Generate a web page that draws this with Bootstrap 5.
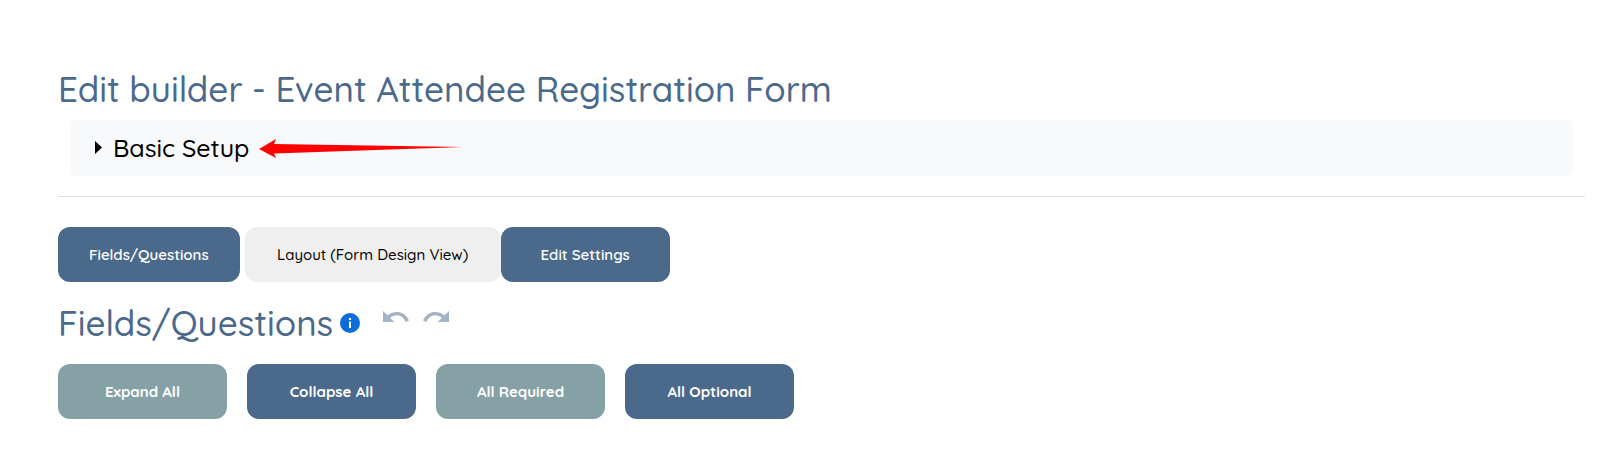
<!DOCTYPE html>
<html lang="en">
<head>
<meta charset="utf-8">
<meta name="viewport" content="width=device-width, initial-scale=1">
<title>Edit builder</title>
<link href="https://cdn.jsdelivr.net/npm/bootstrap@5.3.0/dist/css/bootstrap.min.css" rel="stylesheet">
<style>
  body { font-family: Quicksand, Lato, "Liberation Sans", sans-serif; color: #000; background: #fff; }
  .builder { padding: 68px 26px 32px 58px; }
  .builder-title { font-size: 35px; line-height: 42px; font-weight: 500; color: #4b698b; }
  .setup-panel { background: #f8f9fb; margin: 10px 12px 20px 13px; border-radius: 5px; }
  .setup-panel summary { height: 56px; padding-left: 24px; font-size: 25px; line-height: 32px; font-weight: 500; list-style: none; }
  .setup-panel summary::-webkit-details-marker { display: none; }
  .setup-marker { margin-bottom: 2px; }
  .setup-label { margin: 0 10px 0 11px; }
  .divider { border-top: 1px solid #dfe1e3; opacity: 1; }
  .tabs-row { padding-top: 30px; margin-bottom: 20px; }
  .tabs-row .btn:first-child { margin-right: 5px; }
  .bulk-row { gap: 20px; }
  .btn-builder { height: 55px; min-width: 169px; padding: 0 31px; border: 0; border-radius: 12px; font-size: 15px; line-height: 20px; font-weight: 600; color: #fff; background: #4b698b; }
  .btn-builder:hover { color: #fff; background: #3f5a79; }
  .bulk-row .btn-builder { font-weight: 700; }
  .btn-sage, .btn-sage:hover { background: #86a1a6; }
  .btn-plain, .btn-plain:hover { min-width: 256px; background: #efefef; color: #000; font-weight: 500; }
  .icon-button { line-height: 0; }
  .info-button { margin-left: 7px; }
  .history-buttons { gap: 14px; margin-left: 23px; }
</style>
</head>
<body>
<main class="builder">
  <h1 class="builder-title mb-0">Edit builder - Event Attendee Registration Form</h1>
  <details class="setup-panel">
    <summary class="d-flex align-items-center">
      <svg class="setup-marker" width="7" height="13" viewBox="0 0 7 13" aria-hidden="true"><path d="M0 0L7 6.5L0 13Z"/></svg>
      <span class="setup-label">Basic Setup</span>
      <svg width="204" height="20" viewBox="0 0 204 20" aria-hidden="true"><path d="M0 11L17 1L15 6L204 9L15 15.500L17 20Z" fill="#f00"/></svg>
    </summary>
  </details>
  <hr class="divider m-0">
  <div class="d-flex flex-wrap tabs-row">
    <button type="button" class="btn btn-builder">Fields/Questions</button>
    <button type="button" class="btn btn-builder btn-plain">Layout (Form Design View)</button>
    <button type="button" class="btn btn-builder">Edit Settings</button>
  </div>
  <div class="d-flex align-items-center mb-3 pb-1">
    <h2 class="builder-title mb-0">Fields/Questions</h2>
    <button type="button" class="btn p-0 border-0 icon-button info-button" aria-label="Information">
      <svg width="20" height="20" viewBox="0 0 20 20"><circle cx="10" cy="10" r="10" fill="#0b6cda"/><path d="M9 5h2v2H9zM9 8.500h2V15H9z" fill="#fff"/></svg>
    </button>
    <div class="d-flex history-buttons">
      <button type="button" class="btn p-0 border-0 icon-button" aria-label="Undo">
        <svg width="26" height="24" viewBox="0 0 26 24"><path d="M0 0L4.500 4.300C11 -1 22 -.5 26 9.500L22.500 11C19.500 3 12 2.500 7.200 7L11.500 11H0Z" fill="#a5b4c5"/></svg>
      </button>
      <button type="button" class="btn p-0 border-0 icon-button" aria-label="Redo">
        <svg width="26" height="24" viewBox="0 0 26 24"><path d="M26 0L21.500 4.300C15 -1 4 -.5 0 9.500L3.500 11C6.500 3 14 2.500 18.800 7L14.500 11H26Z" fill="#a5b4c5"/></svg>
      </button>
    </div>
  </div>
  <div class="d-flex flex-wrap bulk-row">
    <button type="button" class="btn btn-builder btn-sage">Expand All</button>
    <button type="button" class="btn btn-builder">Collapse All</button>
    <button type="button" class="btn btn-builder btn-sage">All Required</button>
    <button type="button" class="btn btn-builder">All Optional</button>
  </div>
</main>
<script src="https://cdn.jsdelivr.net/npm/bootstrap@5.3.0/dist/js/bootstrap.bundle.min.js"></script>
</body>
</html>
